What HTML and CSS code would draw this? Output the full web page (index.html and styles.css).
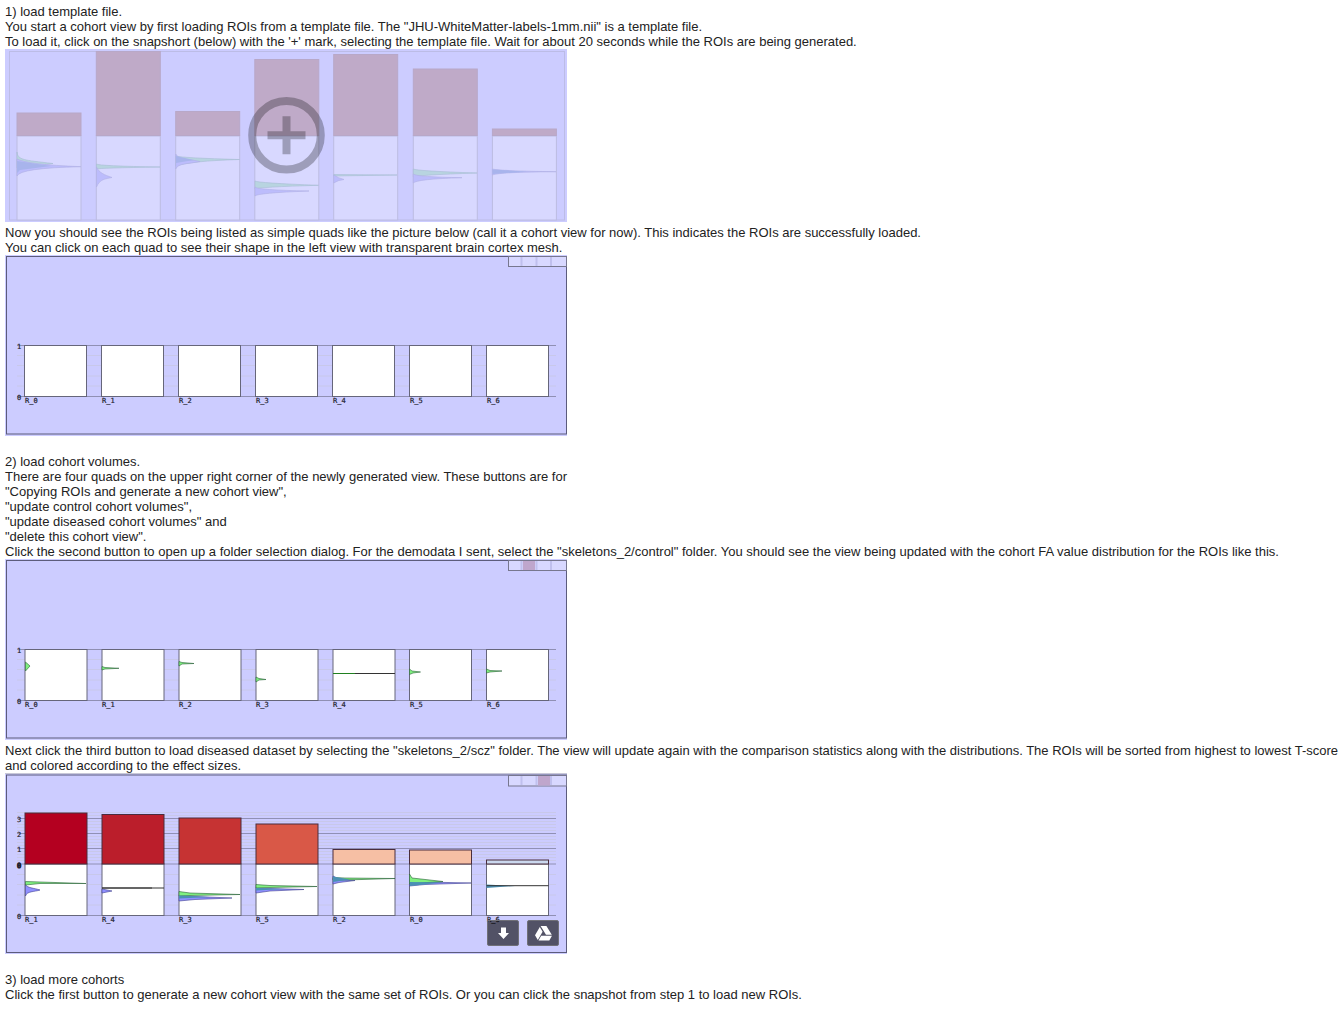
FILE: index.html
```html
<!DOCTYPE html>
<html lang="en">
<head>
<meta charset="utf-8">
<title>Cohort view guide</title>
<link rel="stylesheet" href="styles.css">
</head>
<body>
<main class="guide">
  <section class="step">
    <p>1) load template file.</p>
    <p>You start a cohort view by first loading ROIs from a template file. The "JHU-WhiteMatter-labels-1mm.nii" is a template file.</p>
    <p>To load it, click on the snapshort (below) with the '+' mark, selecting the template file. Wait for about 20 seconds while the ROIs are being generated.</p>
    <figure class="shot">
      <svg class="chart" viewBox="0 0 562 173" width="562" height="173" role="img" aria-label="Snapshot with a plus mark">
        <rect class="panel" width="562" height="173"/>
        <rect class="soft-frame" x="4.5" y="2.5" width="555" height="168.5"/>
        <g class="soft-box">
          <rect x="12" y="87" width="64" height="84"/><rect x="91.3" y="87" width="64" height="84"/><rect x="170.7" y="87" width="64" height="84"/><rect x="249.8" y="87" width="64" height="84"/><rect x="328.7" y="87" width="64" height="84"/><rect x="408.3" y="87" width="64" height="84"/><rect x="487.4" y="87" width="64" height="84"/>
        </g>
        <g class="soft-bar">
          <rect x="12" y="64" width="64" height="22.5"/><rect x="91.3" y="2.5" width="64" height="84"/><rect x="170.7" y="62.5" width="64" height="24"/><rect x="249.8" y="10.5" width="64" height="76"/><rect x="328.7" y="5.5" width="64" height="81"/><rect x="408.3" y="20" width="64" height="66.5"/><rect x="487.4" y="80" width="64" height="6.5"/>
        </g>
        <g class="soft-green">
          <path d="M12 103C13 111 18 111 48 114.500Q26 117 12 119Z"/>
          <path d="M91.500 115Q94 117 155 118Q94 119 91.500 120Z"/>
          <path d="M170.700 107Q178 109 234.500 110.500Q185 112 170.700 117Z"/>
          <path d="M250 132Q253 134 313.500 136.300Q254 138 250 140Z"/>
          <path d="M328.700 125.500L392 126L328.700 127Z"/>
          <path d="M408.300 120Q412 122 472 124Q412 126 408.300 128Z"/>
        </g>
        <g class="soft-blue">
          <path d="M12 110Q22 115.500 76 117.700Q15 119 12 127Z"/>
          <path d="M91.500 118C94 124 100 126 107 128.500C100 130 95 130 91.500 138Z"/>
          <path d="M170.700 105C174 112 186 110 195 112.500C184 115 173 114 170.700 120Z"/>
          <path d="M250 138Q252 141 304 142Q252 144 250 147Z"/>
          <path d="M328.700 126Q333 129 339 130.500Q333 131 328.700 134Z"/>
          <path d="M408.300 125Q412 128 457 128.700Q412 130 408.300 134Z"/>
          <path d="M487.400 120Q495 122 551 122.700Q495 123 487.400 126Z"/>
        </g>
        <path class="soft-mix" d="M12 112L46 117L15 121L12 124Z M171 107L189 111L171 114Z M487.400 120.500L522 122.700L487.400 125Z"/>
        <g class="plus">
          <circle cx="281.500" cy="86.300" r="34.300"/>
          <path d="M262.500 86.300H300.500M281.500 67.300V82.300M281.500 90.300V105.300"/>
        </g>
      </svg>
    </figure>
    <p>Now you should see the ROIs being listed as simple quads like the picture below (call it a cohort view for now). This indicates the ROIs are successfully loaded.</p>
    <p>You can click on each quad to see their shape in the left view with transparent brain cortex mesh.</p>
    <figure class="shot">
      <svg class="chart" viewBox="0 0 562 181" width="562" height="181" role="img" aria-label="Empty cohort view">
        <rect class="panel" width="562" height="181"/>
        <rect class="frame" x="1.500" y="1.500" width="560" height="177.500"/>
        <path class="minor" d="M12 100.500H551M12 110.500H551M12 121H551M12 131H551"/>
        <path class="axis" d="M12 90.500H551M12 141.500H551"/>
        <g class="box">
          <rect x="19.500" y="90.500" width="62" height="51"/><rect x="96.500" y="90.500" width="62" height="51"/><rect x="173.500" y="90.500" width="62" height="51"/><rect x="250.500" y="90.500" width="62" height="51"/><rect x="327.500" y="90.500" width="62" height="51"/><rect x="404.500" y="90.500" width="62" height="51"/><rect x="481.500" y="90.500" width="62" height="51"/>
        </g>
        <g class="tick"><text x="12" y="94">1</text><text x="12" y="145">0</text>
          <text x="20" y="148">R_0</text><text x="97" y="148">R_1</text><text x="174" y="148">R_2</text><text x="251" y="148">R_3</text><text x="328" y="148">R_4</text><text x="405" y="148">R_5</text><text x="482" y="148">R_6</text></g>
        <rect class="strip" x="503.500" y="1.500" width="58" height="10"/>
        <path class="split" d="M516.500 2V11M531.500 2V11M546 2V11"/>
      </svg>
    </figure>
  </section>

  <section class="step">
    <p>2) load cohort volumes.</p>
    <p>There are four quads on the upper right corner of the newly generated view. These buttons are for</p>
    <p>"Copying ROIs and generate a new cohort view",</p>
    <p>"update control cohort volumes",</p>
    <p>"update diseased cohort volumes" and</p>
    <p>"delete this cohort view".</p>
    <p>Click the second button to open up a folder selection dialog. For the demodata I sent, select the "skeletons_2/control" folder. You should see the view being updated with the cohort FA value distribution for the ROIs like this.</p>
    <figure class="shot">
      <svg class="chart" viewBox="0 0 562 181" width="562" height="181" role="img" aria-label="Cohort view with control distributions">
        <rect class="panel" width="562" height="181"/>
        <rect class="frame" x="1.500" y="1.500" width="560" height="177.500"/>
        <path class="minor" d="M12 100.500H551M12 110.500H551M12 121H551M12 131H551"/>
        <path class="axis" d="M12 90.500H551M12 141.500H551"/>
        <g class="box">
          <rect x="20" y="90.500" width="62" height="51"/><rect x="97" y="90.500" width="62" height="51"/><rect x="174" y="90.500" width="62" height="51"/><rect x="251" y="90.500" width="62" height="51"/><rect x="328" y="90.500" width="62" height="51"/><rect x="404.500" y="90.500" width="62" height="51"/><rect x="481.500" y="90.500" width="62" height="51"/>
        </g>
        <g class="green">
          <path d="M20.500 103L25 107L20.500 112Z"/>
          <path d="M97 107.500L100 108.500L114 109.300L100 110L97 111Z"/>
          <path d="M174 102.500L177 103.500L189 104.500L177 105L174 107Z"/>
          <path d="M251 118L254 119.500L261 120.500L254 121L251 123Z"/>
          <path d="M404.500 110L407 112L415.500 113L408 114L404.500 115.500Z"/>
          <path d="M481.500 110L485 111.500L497 112L485 113L481.500 114Z"/>
        </g>
        <path class="line" d="M328 114.500H390M350 114.500H378"/><path class="green-line" d="M328 114.500H350"/>
        <g class="tick"><text x="12" y="94">1</text><text x="12" y="145">0</text>
          <text x="20" y="148">R_0</text><text x="97" y="148">R_1</text><text x="174" y="148">R_2</text><text x="251" y="148">R_3</text><text x="328" y="148">R_4</text><text x="405" y="148">R_5</text><text x="482" y="148">R_6</text></g>
        <rect class="strip" x="503.500" y="1.500" width="58" height="10"/>
        <path class="split" d="M516.500 2V11M531.500 2V11M546 2V11"/>
        <rect class="active" x="518" y="2" width="12" height="9"/>
      </svg>
    </figure>
    <p>Next click the third button to load diseased dataset by selecting the "skeletons_2/scz" folder. The view will update again with the comparison statistics along with the distributions. The ROIs will be sorted from highest to lowest T-score and colored according to the effect sizes.</p>
    <figure class="shot">
      <svg class="chart" viewBox="0 0 562 181" width="562" height="181" role="img" aria-label="Cohort view with comparison statistics">
        <rect class="panel" width="562" height="181"/>
        <path class="edge" d="M0 .500H562"/>
        <rect class="frame" x="1.500" y="2" width="560" height="177.500"/>
        <path class="minor" d="M12 39.500H551M12 42.500H551M12 48.500H551M12 51.500H551M12 54.500H551M12 57.500H551M12 63.500H551M12 66.500H551M12 69.500H551M12 72.500H551M12 78.500H551M12 81.500H551M12 84.500H551M12 87.500H551M12 101.500H551M12 111.500H551M12 122H551M12 132H551"/>
        <path class="axis" d="M12 45.500H551M12 60.500H551M12 75.500H551M12 91H551M12 142.500H551"/>
        <g class="box">
          <rect x="20" y="91" width="62" height="51.500"/><rect x="97" y="91" width="62" height="51.500"/><rect x="174" y="91" width="62" height="51.500"/><rect x="251" y="91" width="62" height="51.500"/><rect x="328" y="91" width="62" height="51.500"/><rect x="404.500" y="91" width="62" height="51.500"/><rect x="481.500" y="91" width="62" height="51.500"/>
        </g>
        <g class="bar">
          <rect x="20" y="40" width="62" height="51" fill="#b40020"/><rect x="97" y="41.500" width="62" height="49.500" fill="#bb1e2b"/><rect x="174" y="45" width="62" height="46" fill="#c63333"/><rect x="251" y="51" width="62" height="40" fill="#d95847"/><rect x="328" y="76.500" width="62" height="14.500" fill="#f6bfa4"/><rect x="404.500" y="77" width="62" height="14" fill="#f6bfa4"/><rect x="481.500" y="87" width="62" height="4" fill="#cbd8ee"/>
        </g>
        <g class="blue">
          <path d="M20.500 111.500C22 115 29 115 35 117C29 119 22 118 20.500 123Z"/>
          <path d="M97 116L107 118L97 120Z"/>
          <path d="M174 122.500L190 123.500L227 125L190 126.500L174 128Z"/>
          <path d="M251 114.500L265 115.500L299 116.500L265 118L251 120Z"/>
          <path d="M328 103L334 106L350 107.500L334 109.500L328 111Z"/>
          <path d="M404.500 107L420 109L466 110L420 111.500L404.500 113Z"/>
        </g>
        <g class="green">
          <path d="M20.500 108.500L35 109L81 110.500L35 110.500L20.500 112Z"/>
          <path d="M174 118.500L185 120L235 121.500L185 122.500L174 123Z"/>
          <path d="M251 111.500L265 112.500L312 113.500L265 114.500L251 115Z"/>
          <path d="M328 104.500L340 105L390 105.500L340 107L328 107Z"/>
          <path d="M404.500 101L407 105L438 108.500L415 110L404.500 111Z"/>
        </g>
        <path class="mix" d="M328 103.500L345 106.500L328 109Z M405 109L438 109.500L405 113Z M174 122.500L205 124L174 125.500Z M251 115L280 116L251 117.500Z M481.500 111.500L510 113L481.500 115Z"/>
        <path class="line" d="M97 115H159M481.500 112.700H543.500M97 115H147"/>
        <g class="tick"><text x="12" y="49">3</text><text x="12" y="64">2</text><text x="12" y="79">1</text><text class="dense" x="12" y="95">0</text><text x="12" y="146">0</text>
          <text x="20" y="149">R_1</text><text x="97" y="149">R_4</text><text x="174" y="149">R_3</text><text x="251" y="149">R_5</text><text x="328" y="149">R_2</text><text x="405" y="149">R_0</text><text x="482" y="149">R_6</text></g>
        <rect class="strip" x="503.500" y="2.500" width="58" height="10.500"/>
        <path class="split" d="M516.500 3V12M531.500 3V12M546 3V12"/>
        <rect class="active" x="533" y="3" width="12" height="9.500"/>
      </svg>
      <div class="actions">
        <button type="button" aria-label="Download">
          <svg viewBox="1 1 30 24" width="30" height="24"><path d="M14 7.500H19V13H22L16.500 19L11 13H14Z"/></svg>
        </button>
        <button type="button" aria-label="Save to Drive">
          <svg viewBox="1 1 30 24" width="30" height="24"><path d="M13.600 6H19.400L24.800 14.700H19Z M12.800 7L15.600 11.800L10.800 20L8 15.200Z M14.200 15.700H25L22.300 20.500H11.500Z"/></svg>
        </button>
      </div>
    </figure>
  </section>

  <section class="step">
    <p>3) load more cohorts</p>
    <p>Click the first button to generate a new cohort view with the same set of ROIs. Or you can click the snapshot from step 1 to load new ROIs.</p>
  </section>
</main>
</body>
</html>
```
FILE: styles.css
```css
body {
  margin: 0;
  background: #fff;
  color: #222;
  font: 13px/15px "Liberation Sans", Arial, sans-serif;
}
.guide {
  display: flex;
  flex-direction: column;
  gap: 15px;
  padding: 4px 5px;
}
p { margin: 0; }
.shot {
  position: relative;
  width: fit-content;
  max-width: 100%;
  margin: 0;
  padding-bottom: 3px;
}
.chart {
  display: block;
  max-width: 100%;
  height: auto;
}

/* shared chart parts */
.panel { fill: #ccccff; }
.frame { fill: none; stroke: #5c5c7c; }
.edge { stroke: #c8c8d8; }
.minor { stroke: #c8c8ea; }
.axis { stroke: #9090b4; }
.box rect { fill: #fff; stroke: #66667a; }
.bar rect { stroke: #4a2c3c; }
.tick text {
  fill: #22222e;
  font: 7px "DejaVu Sans Mono", monospace;
  stroke: #22222e;
  stroke-width: .2;
}
.tick .dense { stroke-width: 1; }
.strip { fill: #d8d8ff; stroke: #77778f; }
.split { stroke: #c0c0ee; stroke-width: 2; }
.active { fill: #bfa6cc; }

/* distributions */
.green path { fill: #80f080; stroke: #286038; stroke-width: .6; }
.blue path { fill: #9090ff; stroke: #404090; stroke-width: .6; }
.mix { fill: #4a90b4; }
.line { fill: none; stroke: #333; }
.green-line { stroke: #208020; }

/* faded snapshot */
.soft-frame { fill: none; stroke: #bcbce6; }
.soft-box rect { fill: #d8d8ff; stroke: #bcbce2; }
.soft-bar rect { fill: #bfaac8; stroke: #b8a8c8; }
.soft-green path { fill: #b8d4e0; stroke: #a8bcd4; stroke-width: .6; }
.soft-blue path { fill: #bcbcfc; stroke: #b0b0e4; stroke-width: .6; }
.soft-mix { fill: #a8b4ec; }
.plus { fill: none; stroke: #000; stroke-opacity: .27; stroke-width: 8; }

.actions {
  position: absolute;
  right: 8px;
  bottom: 11px;
  display: flex;
  gap: 8px;
}
.actions button {
  box-sizing: border-box;
  display: grid;
  place-items: center;
  width: 32px;
  height: 26px;
  padding: 0;
  border: 1px solid #707078;
  border-radius: 2px;
  background: rgba(0, 0, 0, .6);
}
.actions path { fill: #fff; }
```
